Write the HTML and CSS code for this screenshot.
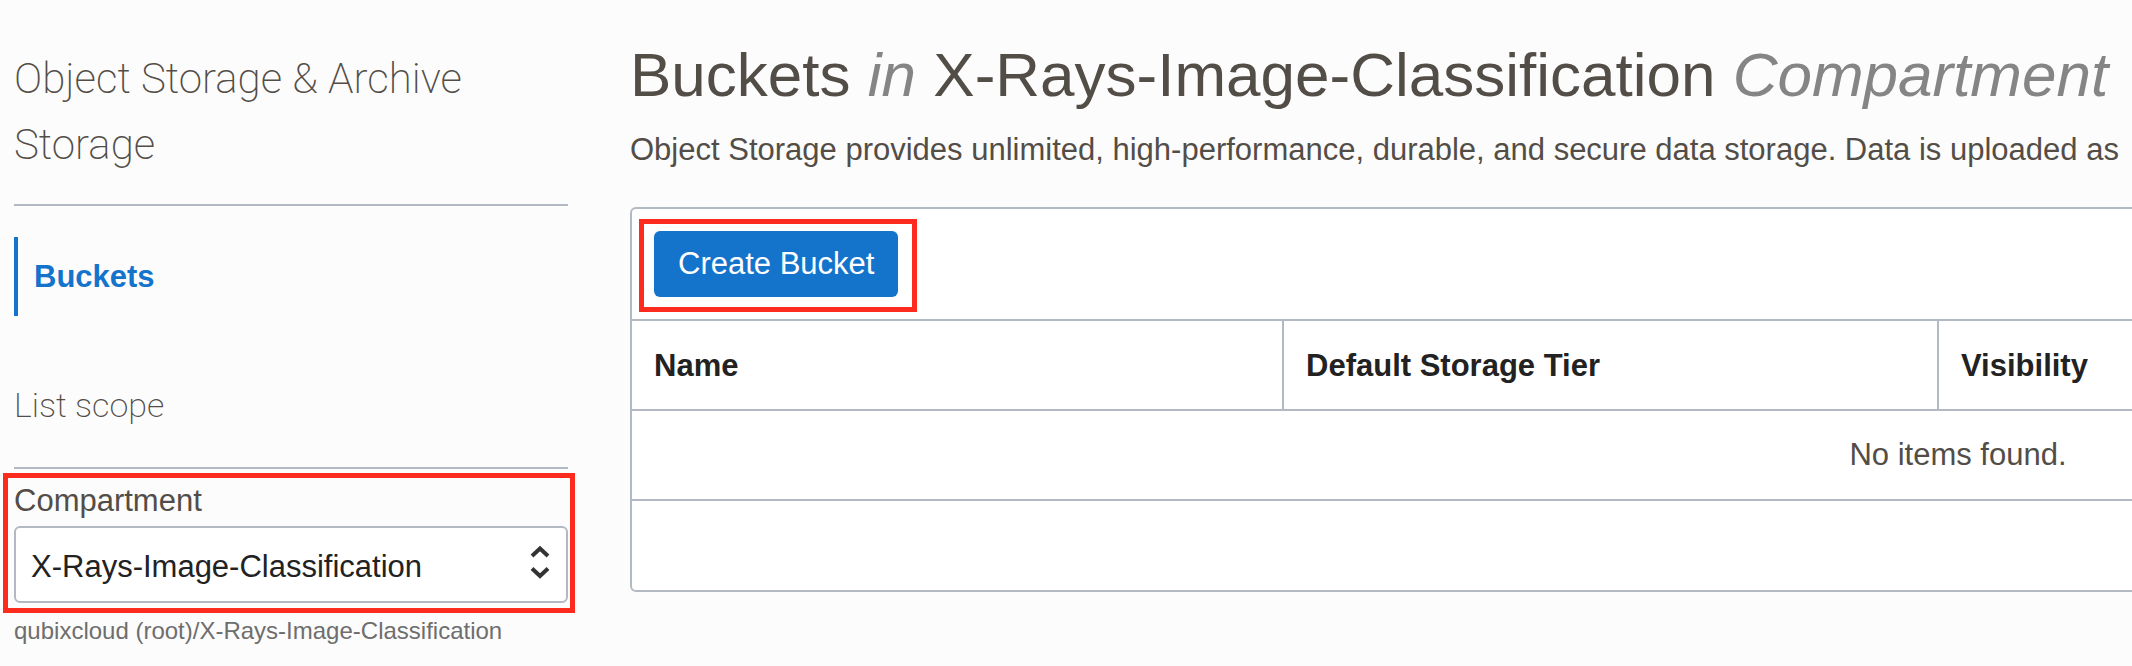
FILE: index.html
```html
<!DOCTYPE html>
<html lang="en">
<head>
<meta charset="utf-8">
<title>Buckets</title>
<link rel="stylesheet" href="styles.css">
</head>
<body>
<div class="layout">
  <aside class="sidebar">
    <h2 class="service-title">Object Storage &amp; Archive Storage</h2>
    <nav class="service-nav">
      <a class="nav-link" href="#buckets" aria-current="page">Buckets</a>
    </nav>
    <h3 class="scope-title">List scope</h3>
    <div class="field highlight">
      <label class="field-label" for="compartment">Compartment</label>
      <div class="select-wrap">
        <select class="select" id="compartment">
          <option>X-Rays-Image-Classification</option>
        </select>
        <svg class="select-icon" viewBox="0 0 20 34" aria-hidden="true">
          <path d="M2 11 L10 3.500 L18 11 M2 23.500 L10 31 L18 23.500"/>
        </svg>
      </div>
    </div>
    <p class="field-path">qubixcloud (root)/X-Rays-Image-Classification</p>
  </aside>
  <main class="content" id="buckets">
    <h1 class="page-title">Buckets <em>in</em> X-Rays-Image-Classification <em>Compartment</em></h1>
    <p class="intro">Object Storage provides unlimited, high-performance, durable, and secure data storage. Data is uploaded as</p>
    <section class="panel">
      <div class="toolbar">
        <div class="action highlight"><button class="button" type="button">Create Bucket</button></div>
      </div>
      <table class="table">
        <thead>
          <tr><th scope="col">Name</th><th scope="col">Default Storage Tier</th><th scope="col">Visibility</th><td></td></tr>
        </thead>
        <tbody>
          <tr><td class="empty" colspan="4">No items found.</td></tr>
        </tbody>
      </table>
      <div class="panel-footer"></div>
    </section>
  </main>
</div>
</body>
</html>
```
FILE: styles.css
```css
:root {
  --line: #b3b9c3;
  --text: #534d47;
  --ink: #222;
  --blue: #1474cc;
  --red: #fd2a1e;
}

* {
  box-sizing: border-box;
}

body {
  margin: 0;
  background: #fcfcfc;
  color: var(--text);
  font: 31px/44px "Liberation Sans", Arial, sans-serif;
}

h1, h2, h3, p {
  margin: 0;
}

.layout {
  display: flex;
  gap: 62px;
  padding: 32px 0 0 14px;
}

.sidebar {
  flex: 0 0 554px;
  padding-top: 14px;
}

.service-title {
  padding-bottom: 26px;
  border-bottom: 2px solid var(--line);
  font: 200 42px/66px Roboto, sans-serif;
}

.service-nav {
  padding: 31px 0 54px;
}

.nav-link {
  display: block;
  padding-left: 16px;
  border-left: 4px solid var(--blue);
  color: var(--blue);
  font-weight: bold;
  line-height: 79px;
  text-decoration: none;
}

.scope-title {
  padding-bottom: 27px;
  border-bottom: 2px solid var(--line);
  font: 200 34px/70px Roboto, sans-serif;
}

.highlight {
  position: relative;
}

.highlight::after {
  position: absolute;
  border: 5px solid var(--red);
  content: "";
  pointer-events: none;
}

.field {
  padding-top: 10px;
}

.field::after {
  inset: 4px -7px -10px -11px;
}

.field-label {
  display: block;
  margin-bottom: 3px;
}

.select-wrap {
  position: relative;
}

.select {
  display: block;
  width: 100%;
  height: 77px;
  padding: 4px 60px 0 15px;
  border: 2px solid var(--line);
  border-radius: 6px;
  appearance: none;
  background: #fff;
  color: var(--ink);
  font: inherit;
}

.select-icon {
  position: absolute;
  top: 19px;
  right: 18px;
  width: 20px;
  height: 34px;
  fill: none;
  stroke: #333;
  stroke-width: 4px;
}

.field-path {
  padding-top: 10px;
  color: #6e6e6e;
  font-size: 24px;
  line-height: 36px;
}

.content {
  flex: 1;
  min-width: 0;
  overflow: hidden;
}

.page-title {
  font-size: 62px;
  font-weight: normal;
  line-height: 86px;
  white-space: nowrap;
}

.page-title em {
  color: #858585;
}

.intro {
  padding: 10px 0 35px;
  white-space: nowrap;
}

.panel {
  width: 2656px;
  border: 2px solid var(--line);
  border-radius: 6px;
  background: #fff;
}

.toolbar {
  padding: 22px;
}

.action {
  width: fit-content;
}

.action::after {
  inset: -12px -19px -15px -15px;
}

.button {
  display: block;
  height: 66px;
  padding: 0 24px;
  border: 0;
  border-radius: 6px;
  background: var(--blue);
  color: #fff;
  font: inherit;
}

.table {
  width: 100%;
  border-collapse: collapse;
  table-layout: fixed;
}

.table th,
.table td {
  height: 90px;
  padding: 0 22px;
  border: 2px solid var(--line);
  border-right: 0;
}

.table th {
  width: 655px;
  padding-top: 2px;
  color: var(--ink);
  text-align: left;
}

.table th:first-child {
  width: 651px;
}

.table tr > :first-child {
  border-left: 0;
}

.table .empty {
  text-align: center;
}

.panel-footer {
  height: 89px;
}
```
